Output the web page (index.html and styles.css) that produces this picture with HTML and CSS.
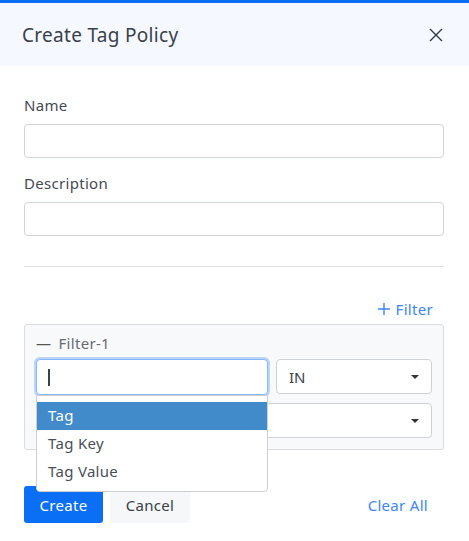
FILE: index.html
```html
<!DOCTYPE html>
<html lang="en">
<head>
    <meta charset="UTF-8">
    <meta name="viewport" content="width=device-width, initial-scale=1.0">
    <title>Create Tag Policy</title>
    <link rel="stylesheet" href="styles.css">
</head>
<body>

<div class="modal">
    <div class="modal-header">
        <div class="modal-title">Create Tag Policy</div>
        <button class="close-btn" aria-label="Close">
            <svg width="14" height="14" viewBox="0 0 14 14">
                <path d="M1 1 L13 13 M13 1 L1 13" stroke="#2f3a4a" stroke-width="1.4" fill="none"/>
            </svg>
        </button>
    </div>

    <div class="modal-body">
        <label class="field-label">Name</label>
        <input type="text" class="field-input">

        <label class="field-label second">Description</label>
        <input type="text" class="field-input">

        <div class="divider"></div>

        <div class="add-filter-row">
            <a class="link-btn">
                <svg class="plus" width="12" height="12" viewBox="0 0 12 12">
                    <path d="M6 0 V12 M0 6 H12" stroke="#3d85f7" stroke-width="1.4" fill="none"/>
                </svg>
                Filter
            </a>
        </div>

        <div class="filter-box">
            <div class="filter-title"><span class="dash">&mdash;</span> Filter-1</div>
            <div class="filter-row">
                <div class="combo">
                    <input type="text" class="filter-input focused">
                    <span class="text-cursor"></span>
                    <div class="dropdown">
                        <div class="dropdown-item selected">Tag</div>
                        <div class="dropdown-item">Tag Key</div>
                        <div class="dropdown-item">Tag Value</div>
                    </div>
                </div>
                <div class="select">
                    <span>IN</span>
                    <span class="caret"></span>
                </div>
            </div>
            <div class="filter-row">
                <div class="select wide">
                    <span></span>
                    <span class="caret"></span>
                </div>
            </div>
        </div>

        <div class="footer">
            <button class="btn btn-primary">Create</button>
            <button class="btn btn-light">Cancel</button>
            <a class="link-btn clear">Clear All</a>
        </div>
    </div>
</div>

</body>
</html>
```

FILE: styles.css
```css
body {
    margin: 0;
    font-family: 'Noto Sans', sans-serif;
    background: #fff;
    color: #3a3f47;
}
.modal {
    width: 469px;
    border-top: 3px solid #0b6ff5;
}
.modal-header {
    height: 63px;
    background: #f5f9ff;
    display: flex;
    align-items: center;
    justify-content: space-between;
    padding: 0 26px 0 22px;
}
.modal-title {
    font-size: 19px;
    color: #3a3f4a;
    letter-spacing: 0.3px;
}
.close-btn {
    border: none;
    background: none;
    padding: 0;
    width: 14px;
    height: 14px;
    display: flex;
    cursor: pointer;
}
.modal-body {
    padding: 29px 25px 0 24px;
}
.field-label {
    display: block;
    font-size: 15px;
    line-height: 20px;
    margin-bottom: 9px;
    color: #444a52;
    letter-spacing: 0.3px;
}
.field-label.second {
    margin-top: 15px;
}
.field-input {
    display: block;
    box-sizing: border-box;
    width: 100%;
    height: 34px;
    border: 1px solid #d0d4da;
    border-radius: 4px;
    margin: 0;
}
.divider {
    height: 1px;
    background: #e2e2e2;
    margin: 30px 0 0;
}
.add-filter-row {
    display: flex;
    justify-content: flex-end;
    padding: 26px 11px 0 0;
    height: 31px;
}
.link-btn {
    color: #3d85f7;
    font-size: 15px;
    line-height: 20px;
    cursor: pointer;
    letter-spacing: 0.3px;
    display: flex;
    align-items: center;
}
.plus {
    margin-right: 6px;
}
.filter-box {
    background: #f8f9fa;
    border: 1px solid #dcdcdc;
    border-radius: 3px;
    padding: 7px 11px 11px 11px;
}
.filter-title {
    font-size: 15px;
    line-height: 22px;
    color: #666b72;
    margin-bottom: 5px;
    letter-spacing: 0.3px;
}
.dash {
    margin-right: 3px;
    color: #555;
}
.filter-row {
    display: flex;
    gap: 8px;
}
.filter-row + .filter-row {
    margin-top: 7px;
}
.combo {
    position: relative;
    width: 232px;
}
.filter-input {
    box-sizing: border-box;
    width: 100%;
    height: 36px;
    border: 1px solid #ced4da;
    border-radius: 4px;
    margin: 0;
    display: block;
}
.filter-input.focused {
    border-color: #86b7fe;
    box-shadow: 0 0 0 2px #b9d5fc;
}
.text-cursor {
    position: absolute;
    left: 12px;
    top: 10px;
    width: 2px;
    height: 17px;
    background: #3c4048;
}
.select {
    box-sizing: border-box;
    flex: 1;
    height: 35px;
    border: 1px solid #cfd3d8;
    border-radius: 4px;
    background: #fff;
    display: flex;
    align-items: center;
    justify-content: space-between;
    padding: 0 12px 0 12px;
    font-size: 15px;
    color: #3a3f47;
}
.filter-row + .filter-row .select {
    margin-top: 1px;
}
.caret {
    width: 0;
    height: 0;
    border-left: 4px solid transparent;
    border-right: 4px solid transparent;
    border-top: 4px solid #333;
}
.dropdown {
    position: absolute;
    top: 36px;
    left: 0;
    width: 232px;
    box-sizing: border-box;
    background: #fff;
    border: 1px solid #cfcfcf;
    border-radius: 0 0 4px 4px;
    padding: 6px 0 5px;
    z-index: 10;
}
.dropdown-item {
    height: 28px;
    line-height: 27px;
    padding: 0 11px;
    font-size: 15px;
    color: #4a4f57;
    letter-spacing: 0.3px;
}
.dropdown-item.selected {
    background: #428bca;
    color: #fff;
}
.footer {
    display: flex;
    align-items: center;
    gap: 7px;
    margin-top: 36px;
}
.btn {
    height: 37px;
    border: none;
    border-radius: 3px;
    font-family: inherit;
    font-size: 15px;
    padding: 0 12px;
    letter-spacing: 0.3px;
    cursor: pointer;
}
.btn-primary {
    background: #0b6ff5;
    color: #fff;
    width: 79px;
}
.btn-light {
    background: #f6f7f9;
    color: #3a3f47;
    width: 80px;
}
.link-btn.clear {
    margin-left: auto;
    margin-right: 16px;
}
```
